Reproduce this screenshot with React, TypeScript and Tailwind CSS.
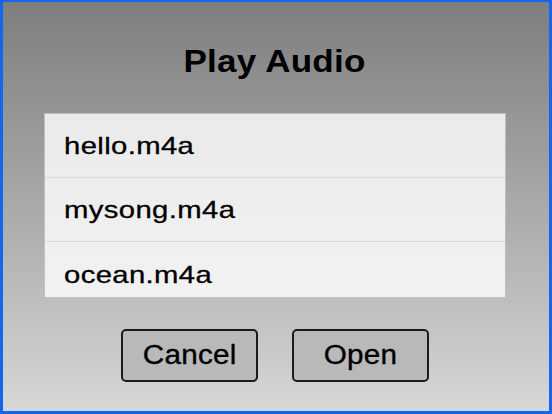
import React from "react";

const files = ["hello.m4a", "mysong.m4a", "ocean.m4a"];

export default function App() {
  return (
    <div
      className="w-[552px] h-[414px] border-solid border-[#1466f2] border-t-[2px] border-l-[3px] border-r-[3px] border-b-[3px] bg-gradient-to-b from-[#7e7e7e] to-[#d7d7d7] flex flex-col items-center overflow-hidden"
      style={{ fontFamily: '"Liberation Sans", Arial, sans-serif' }}
    >
      <h1 className="mt-[42px] ml-[-2px] h-[36px] leading-[36px] text-[31px] font-bold text-black scale-x-[1.13] tracking-[0.2px]">
        Play Audio
      </h1>
      <div className="mt-[33px] ml-[-2px] w-[462px] h-[185px] overflow-hidden border border-[#bfbfbf] bg-gradient-to-b from-[#eaeaea] to-[#f2f2f2] flex flex-col">
        {files.map((f, i) => (
          <div
            key={f}
            className={`shrink-0 h-[64px] flex items-center pl-[19px] text-[24px] text-black [-webkit-text-stroke:0.3px_#000] ${
              i < files.length - 1 ? "border-b border-[#d9d9d9]" : ""
            }`}
          >
            <span className="leading-[28px] pt-[1px] origin-left scale-x-[1.22] tracking-[0.3px]">{f}</span>
          </div>
        ))}
      </div>
      <div className="mt-[31px] ml-[-2px] flex gap-[34px]">
        {["Cancel", "Open"].map((b) => (
          <button
            key={b}
            className="w-[137px] h-[53px] rounded-[5px] border-2 border-[#1b1b1b] bg-[#b9b9b9] text-[27px] text-black [-webkit-text-stroke:0.35px_#000] flex items-center justify-center"
          >
            <span className="scale-x-[1.1] tracking-[0.2px]">{b}</span>
          </button>
        ))}
      </div>
    </div>
  );
}
